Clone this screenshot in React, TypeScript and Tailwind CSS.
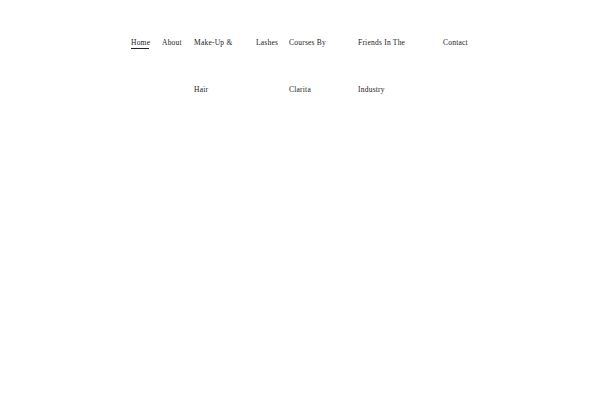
const links = [
  { label: "Home", width: "w-[18px]", active: true },
  { label: "About", width: "w-[19px]" },
  { label: "Make-Up & Hair", width: "w-[49px]" },
  { label: "Lashes", width: "w-[20px]" },
  { label: "Courses By Clarita", width: "w-[56px]" },
  { label: "Friends In The Industry", width: "w-[72px]" },
  { label: "Contact", width: "w-[24px]" },
];

export default function App() {
  return (
    <div className="h-[400px] w-[600px] bg-white">
      <nav className="flex justify-center pt-[19px] pr-[2px]">
        <ul className="flex items-start gap-[13px] font-['Liberation_Serif',serif] text-[7.5px] leading-[47px] tracking-[0.03em] text-[#1a1a1a]">
          {links.map((link) => (
            <li key={link.label} className={`${link.width} shrink-0`}>
              <a href="#" className="relative block whitespace-normal">
                {link.label}
                {link.active && (
                  <span className="absolute left-0 top-[29px] h-px w-full bg-[#222]" />
                )}
              </a>
            </li>
          ))}
        </ul>
      </nav>
    </div>
  );
}
